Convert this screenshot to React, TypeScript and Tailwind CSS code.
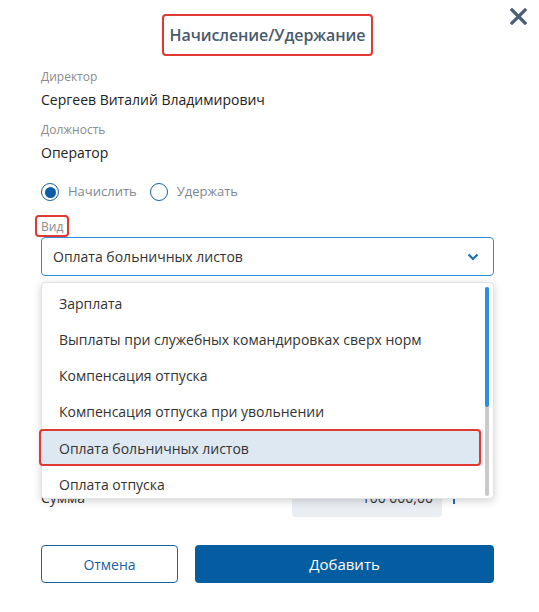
import type { FC } from "react";

const items = [
  "Зарплата",
  "Выплаты при служебных командировках сверх норм",
  "Компенсация отпуска",
  "Компенсация отпуска при увольнении",
  "Оплата больничных листов",
  "Оплата отпуска",
];

const Radio: FC<{ checked?: boolean; label: string }> = ({ checked, label }) => (
  <label className="flex items-center gap-[9px]">
    <span className="w-[18px] h-[18px] rounded-full border-[1.5px] border-[#1d5f9f] flex items-center justify-center">
      {checked && <span className="w-[11px] h-[11px] rounded-full bg-[#0b5ea6]" />}
    </span>
    <span className="text-[13px] text-[#7d8893]">{label}</span>
  </label>
);

export default function App() {
  return (
    <div
      className="relative w-[539px] h-[612px] bg-white text-[#222]"
      style={{ fontFamily: '"Open Sans", "Noto Sans", sans-serif' }}
    >
      <button className="absolute top-[8px] right-[12px] w-[17px] h-[17px]">
        <svg viewBox="0 0 17 17" width="17" height="17">
          <path d="M2 2 L15 15 M15 2 L2 15" stroke="#4a5f75" strokeWidth="3.2" strokeLinecap="square" />
        </svg>
      </button>

      <div className="flex justify-center pt-[14px] pr-[4px]">
        <div className="h-[42px] px-[6px] flex items-center border-2 border-[#e0392f] rounded-[4px] text-[16px] font-semibold text-[#4a5a6b] tracking-[-0.1px]">
          Начисление/Удержание
        </div>
      </div>

      <div className="pl-[41px] pr-[45px]">
        <div className="mt-[13px] text-[12px] leading-[16px] text-[#8b8b8b]">Директор</div>
        <div className="mt-[5px] text-[14px] leading-[20px]">Сергеев Виталий Владимирович</div>
        <div className="mt-[12px] text-[12px] leading-[16px] text-[#8b8b8b]">Должность</div>
        <div className="mt-[5px] text-[14px] leading-[20px]">Оператор</div>

        <div className="mt-[20px] flex items-center gap-[13px] h-[18px]">
          <Radio checked label="Начислить" />
          <Radio label="Удержать" />
        </div>

        <div className="mt-[14px] -ml-[6px] w-[34px] h-[22px] pt-[2px] pl-[4px] border-2 border-[#e0392f] rounded-[4px] text-[12px] leading-[16px] text-[#8b8b8b]">
          Вид
        </div>

        <div className="relative">
          <div className="h-[39px] flex items-center justify-between pl-[11px] pr-[14px] border border-[#2d8bdd] rounded-[4px] text-[14px] text-[#333]">
            <span>Оплата больничных листов</span>
            <svg viewBox="0 0 12 8" width="12" height="8">
              <path d="M1.5 1.5 L6 6 L10.5 1.5" fill="none" stroke="#1f6fb6" strokeWidth="2.2" />
            </svg>
          </div>

          <div className="absolute left-0 right-0 top-[45px] h-[217px] bg-white border border-[#dfe3e8] rounded-[4px] shadow-[0_2px_8px_rgba(0,0,0,0.18)] z-10">
            <div className="h-full overflow-hidden pt-[2px] pr-[10px]">
              {items.map((it, i) => (
                <div
                  key={it}
                  className={`h-[36.25px] flex items-center pl-[17px] text-[14px] text-[#333] ${i === 4 ? "bg-[#dde8f3]" : ""}`}
                >
                  {it}
                </div>
              ))}
            </div>
            <div className="absolute left-[-3px] w-[442px] top-[146px] h-[37px] border-2 border-[#e0392f] rounded-[4px]" />
            <div className="absolute right-[4px] top-[4px] bottom-[2px] w-[4px] rounded-full bg-[#c9c9c9]">
              <div className="h-[120px] rounded-full bg-[#2b8fe0]" />
            </div>
          </div>
        </div>

        <div className="mt-[201px] flex items-center h-[40px]">
          <span className="text-[14px] text-[#333]">Сумма</span>
          <div className="ml-auto w-[150px] h-[40px] bg-[#eaeef3] rounded-[4px] flex items-center justify-end pr-[9px] text-[14px] text-[#333]">
            100 000,00
          </div>
          <span className="ml-[11px] mr-[39px] w-[2px] h-[14px] bg-[#1f6fb6]" />
        </div>

        <div className="mt-[28px] flex gap-[17px]">
          <button className="w-[137px] h-[38px] border border-[#1a5fa0] rounded-[4px] text-[14px] text-[#1a5fa0]">
            Отмена
          </button>
          <button className="flex-1 h-[38px] bg-[#045da0] rounded-[4px] text-[15px] text-white">
            Добавить
          </button>
        </div>
      </div>
    </div>
  );
}
